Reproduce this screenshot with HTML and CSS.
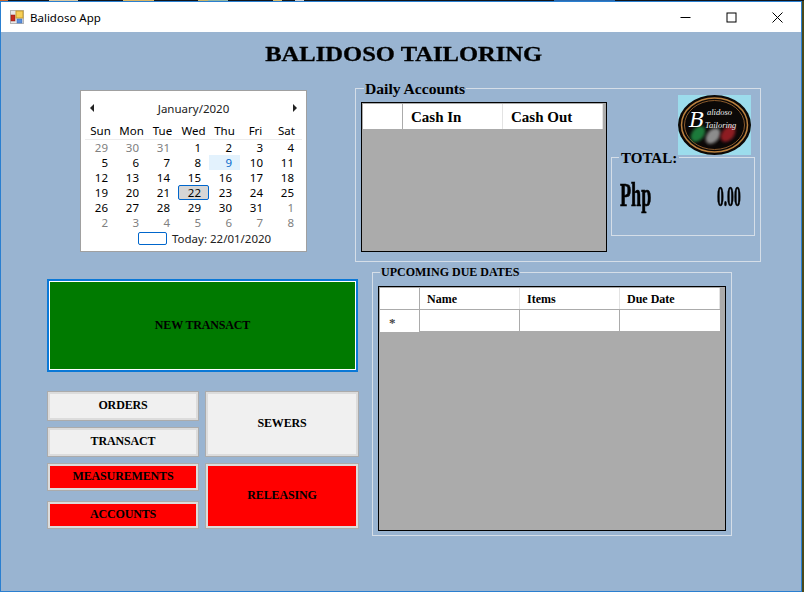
FILE: index.html
```html
<!DOCTYPE html>
<html>
    <head>
        <title>Balidoso App</title>
        <link rel="stylesheet" href="styles.css">
    </head>
    <body>
        <div class="window">
            <div class="titlebar">
                <svg class="app-icon" width="14" height="14" viewBox="0 0 14 14">
                    <rect x="0.5" y="0.5" width="13" height="13" fill="#e8e8e8" stroke="#b5b5b5"/>
                    <rect x="1" y="5" width="4" height="6" fill="#c62a1c" stroke="#8a1a10" stroke-width="0.5"/>
                    <rect x="6" y="1" width="7" height="7" fill="#f6cf57" stroke="#c79a2a"/>
                    <rect x="7" y="9" width="5" height="4" fill="#5b8fdc" stroke="#3a68b0" stroke-width="0.5"/>
                </svg>
                <span class="app-name">Balidoso App</span>
                <div class="caption-buttons">
                    <svg width="11" height="11" viewBox="0 0 11 11"><path d="M0.5 5.5H10.5" stroke="#000" fill="none"/></svg>
                    <svg width="11" height="11" viewBox="0 0 11 11"><rect x="1" y="1" width="9" height="9" stroke="#000" fill="none"/></svg>
                    <svg width="11" height="11" viewBox="0 0 11 11"><path d="M0.5 0.5L10.5 10.5M10.5 0.5L0.5 10.5" stroke="#000" fill="none"/></svg>
                </div>
            </div>
            <div class="form">
                <h1 class="shop-title">BALIDOSO TAILORING</h1>
                <div class="columns">
                    <div class="left-col">
                        <div class="calendar">
                            <div class="cal-head">
                                <span class="arrow arrow-left"></span>
                                <span>January/2020</span>
                                <span class="arrow arrow-right"></span>
                            </div>
                            <div class="cal-grid">
                                <span class="dow">Sun</span><span class="dow">Mon</span><span class="dow">Tue</span><span class="dow">Wed</span><span class="dow">Thu</span><span class="dow">Fri</span><span class="dow">Sat</span>
                                <span class="off">29</span><span class="off">30</span><span class="off">31</span><span>1</span><span>2</span><span>3</span><span>4</span>
                                <span>5</span><span>6</span><span>7</span><span>8</span><span class="hover">9</span><span>10</span><span>11</span>
                                <span>12</span><span>13</span><span>14</span><span>15</span><span>16</span><span>17</span><span>18</span>
                                <span>19</span><span>20</span><span>21</span><span class="selected">22</span><span>23</span><span>24</span><span>25</span>
                                <span>26</span><span>27</span><span>28</span><span>29</span><span>30</span><span>31</span><span class="off">1</span>
                                <span class="off">2</span><span class="off">3</span><span class="off">4</span><span class="off">5</span><span class="off">6</span><span class="off">7</span><span class="off">8</span>
                            </div>
                            <div class="cal-today">
                                <span class="today-box"></span>
                                <span>Today: 22/01/2020</span>
                            </div>
                        </div>
                        <button class="btn btn-new">NEW TRANSACT</button>
                        <div class="btn-grid">
                            <button class="btn btn-orders">ORDERS</button>
                            <button class="btn btn-sewers">SEWERS</button>
                            <button class="btn btn-transact">TRANSACT</button>
                            <button class="btn btn-red btn-measure">MEASUREMENTS</button>
                            <button class="btn btn-red btn-releasing">RELEASING</button>
                            <button class="btn btn-red btn-accounts">ACCOUNTS</button>
                        </div>
                    </div>
                    <div class="right-col">
                        <fieldset class="daily">
                            <legend>Daily Accounts</legend>
                            <div class="data-grid daily-grid">
                                <div class="grid-head">
                                    <div class="corner"></div>
                                    <div class="col">Cash In</div>
                                    <div class="col">Cash Out</div>
                                </div>
                            </div>
                            <div class="daily-side">
                                <svg class="logo" width="73" height="60" viewBox="0 0 73 60">
                                    <defs>
                                        <filter id="soft"><feGaussianBlur stdDeviation="1.4"/></filter>
                                    </defs>
                                    <rect width="73" height="60" fill="#9cdcec"/>
                                    <ellipse cx="36.5" cy="30" rx="36.5" ry="30" fill="#0b0807"/>
                                    <ellipse cx="36.5" cy="30" rx="33" ry="27" fill="none" stroke="#b9803f" stroke-width="1.5"/>
                                    <ellipse cx="36.5" cy="30" rx="30" ry="24.5" fill="none" stroke="#8a5a2c" stroke-width="1"/>
                                    <ellipse cx="20" cy="39" rx="6" ry="9" fill="#1f7a3a" transform="rotate(40 20 39)" filter="url(#soft)"/>
                                    <ellipse cx="35" cy="41" rx="6" ry="9" fill="#8c8c8c" transform="rotate(40 35 41)" filter="url(#soft)"/>
                                    <ellipse cx="50" cy="39" rx="6" ry="9" fill="#8e1c24" transform="rotate(40 50 39)" filter="url(#soft)"/>
                                    <text class="logo-b" x="11" y="32">B</text>
                                    <text class="logo-script" x="29" y="20">alidoso</text>
                                    <text class="logo-script" x="27" y="33">Tailoring</text>
                                </svg>
                                <fieldset class="total">
                                    <legend>TOTAL:</legend>
                                    <div class="total-row">
                                        <span class="php">Php</span>
                                        <span class="amount">0.00</span>
                                    </div>
                                </fieldset>
                            </div>
                        </fieldset>
                        <fieldset class="due">
                            <legend>UPCOMING DUE DATES</legend>
                            <div class="data-grid due-grid">
                                <div class="grid-head">
                                    <div class="corner"></div>
                                    <div class="col">Name</div>
                                    <div class="col">Items</div>
                                    <div class="col">Due Date</div>
                                </div>
                                <div class="grid-row">
                                    <div class="row-head">*</div>
                                    <div class="cell"></div>
                                    <div class="cell"></div>
                                    <div class="cell"></div>
                                </div>
                            </div>
                        </fieldset>
                    </div>
                </div>
            </div>
        </div>
    </body>
</html>
```

FILE: styles.css
```css
* {
    box-sizing: border-box;
}
html, body {
    margin: 0;
    height: 100%;
    overflow: hidden;
}
body {
    font-family: 'Liberation Serif', 'Times New Roman', serif;
    color: #000;
    /* bits of the desktop showing round the window */
    background: linear-gradient(to right,
        #c8662d 0 8px, #10151c 8px 49px, #d8c9a5 49px 78px, #10151c 78px 123px,
        #d9b565 123px 154px, #10151c 154px 198px, #c8b46a 198px 208px, #8fb5a5 208px 228px,
        #10151c 228px 273px, #d6bb6e 273px 282px, #10151c 282px 295px, #cfcfcf 295px 304px,
        #10151c 304px 554px, #2a6aaf 554px 615px, #10151c 615px) top left / 100% 1px no-repeat, #4a4a1c;
}
.window {
    width: 802px;
    height: 591px;
    margin-top: 1px;
    border: 1px solid #2a7fd0;
    background-color: #99b4d1;
}

/* title bar */
.titlebar {
    height: 30px;
    background-color: #fff;
    display: flex;
    align-items: center;
    padding-left: 9px;
}
.app-icon {
    margin-right: 6px;
}
.app-name {
    font-family: 'Noto Sans', sans-serif;
    font-size: 11.5px;
}
.caption-buttons {
    margin-left: auto;
    display: flex;
    gap: 35px;
    padding-right: 18px;
}

/* form */
.form {
    padding-top: 8px;
}
.shop-title {
    width: fit-content;
    margin: 0 auto;
    height: 50px;
    font-size: 21px;
    line-height: 28px;
    padding-left: 4px;
    white-space: nowrap;
    transform: scaleX(1.17);
    -webkit-text-stroke: 0.3px #000;
}
.columns {
    display: flex;
    padding-left: 46px;
}
.left-col {
    width: 308px;
    flex: none;
}
.right-col {
    display: flex;
    flex-direction: column;
    flex: none;
}

/* calendar */
.calendar {
    width: 227px;
    height: 162px;
    margin-left: 33px;
    background-color: #fff;
    border: 1px solid #a0a0a0;
    outline: 1px solid #fff;
    outline-offset: -2px;
    font-family: 'Noto Sans', sans-serif;
    font-size: 11.5px;
    padding: 9px 4px 0 4px;
}
.cal-head {
    display: flex;
    justify-content: space-between;
    align-items: center;
    height: 16px;
    padding: 0 5px 0 5px;
    color: #222;
}
.arrow {
    width: 0;
    height: 0;
    border-top: 4px solid transparent;
    border-bottom: 4px solid transparent;
}
.arrow-left {
    border-right: 4px solid #222;
}
.arrow-right {
    border-left: 4px solid #222;
}
.cal-grid {
    display: grid;
    grid-template-columns: repeat(7, 31px);
    grid-template-rows: 19px repeat(6, 15px);
    line-height: 15px;
    margin-top: 5px;
    text-align: right;
}
.cal-grid span {
    padding-right: 8px;
}
.cal-grid .dow {
    text-align: center;
    padding: 0;
    height: 19px;
    line-height: 20px;
    border-bottom: 1px solid #ececec;
}
.cal-grid .off {
    color: #808080;
}
.cal-grid .hover {
    background-color: #e3f2fd;
    color: #0a6ccc;
}
.cal-grid .selected {
    background-color: #d6d6d6;
    border: 1px solid #0066cc;
    border-radius: 2px;
    line-height: 13px;
    padding-right: 7px;
}
.cal-today {
    display: flex;
    align-items: center;
    gap: 5px;
    height: 15px;
    margin-top: 1px;
    padding-left: 53px;
    color: #222;
}
.today-box {
    width: 29px;
    height: 13px;
    border: 1px solid #0066cc;
    border-radius: 2px;
}

/* buttons */
.btn {
    display: block;
    font-family: 'Liberation Serif', 'Times New Roman', serif;
    font-weight: bold;
    font-size: 12px;
    letter-spacing: -0.15px;
    color: #000;
    padding: 0 0 1px;
    margin: 0;
    border: 1px solid #ababab;
    box-shadow: inset 0 0 0 2px #dcdcdc;
    background-color: #f0f0f0;
    border-radius: 0;
}
.btn-new {
    width: 311px;
    height: 93px;
    margin-top: 27px;
    background-color: #007a00;
    border: 2px solid #0a78d7;
    box-shadow: inset 0 0 0 1px #fff;
}
.btn-grid {
    display: grid;
    grid-template-columns: 152px 154px;
    grid-template-rows: 30px 30px 28px 32px;
    gap: 6px;
    width: 312px;
    margin-top: 19px;
}
.btn-grid .btn {
    width: 100%;
    height: 100%;
}
.btn-orders { grid-column: 1; grid-row: 1; }
.btn-transact { grid-column: 1; grid-row: 2; }
.btn-measure { grid-column: 1; grid-row: 3; }
.btn-grid .btn-accounts { grid-column: 1; grid-row: 4; margin-top: 4px; height: 28px; }
.btn-sewers { grid-column: 2; grid-row: 1 / 3; }
.btn-releasing { grid-column: 2; grid-row: 3 / 5; }
.btn-red {
    background-color: #ff0000;
}

/* group boxes */
fieldset {
    margin: 0;
    border: 1px solid #d5dee8;
    padding: 0;
    min-width: 0;
}
legend {
    font-weight: bold;
    padding: 0 1px;
}
.daily {
    width: 406px;
    height: 181px;
    margin-top: -9px;
    padding: 0 0 0 5px;
    display: flex;
    gap: 4px;
}
.daily > legend {
    font-size: 15.6px;
    line-height: 15px;
    margin-left: 3px;
}
.due {
    width: 360px;
    height: 270px;
    margin: 4px 0 0 17px;
    padding: 0 0 0 5px;
}
.due > legend {
    font-size: 12px;
    line-height: 13px;
    margin-left: 2px;
}

/* grids */
.data-grid {
    background-color: #ababab;
    border: 1px solid #000;
    padding: 1px;
}
.daily-grid {
    width: 246px;
    height: 150px;
    margin-top: 6px;
}
.due-grid {
    width: 348px;
    height: 245px;
    margin-top: 7px;
}
.grid-head,
.grid-row {
    display: flex;
}
.daily-grid .grid-head {
    height: 25px;
    font-size: 15px;
    font-weight: bold;
    line-height: 27px;
}
.daily-grid .corner {
    width: 40px;
}
.daily-grid .col {
    width: 100px;
}
.due-grid .grid-head {
    height: 21px;
    font-size: 12px;
    font-weight: bold;
    line-height: 22px;
}
.due-grid .corner {
    width: 40px;
}
.due-grid .col {
    width: 100px;
    padding-left: 7px;
}
.corner,
.col {
    background-color: #fff;
    border-right: 1px solid #e3e3e3;
}
.corner {
    border-right-color: #ababab;
}
.col {
    padding-left: 8px;
}
.grid-row {
    height: 23px;
    border-top: 1px solid #ababab;
}
.row-head {
    width: 39px;
    background-color: #fff;
    font-size: 13px;
    font-weight: bold;
    color: #444;
    line-height: 26px;
    padding-left: 9px;
}
.cell {
    width: 100px;
    background-color: #fff;
    border-left: 1px solid #ababab;
    border-bottom: 1px solid #ababab;
}
.cell:last-child {
    width: 101px;
}

/* right of daily accounts */
.daily-side {
    width: 144px;
    display: flex;
    flex-direction: column;
    align-items: flex-end;
}
.logo {
    margin: -1px 4px 0 0;
    display: block;
}
.logo-b {
    font-family: 'DejaVu Serif', serif;
    font-style: italic;
    font-size: 21px;
    fill: #fff;
}
.logo-script {
    font-family: 'Liberation Serif', serif;
    font-style: italic;
    font-size: 8.5px;
    fill: #eee;
}
.total {
    width: 144px;
    height: 87px;
    margin-top: -6px;
    padding: 0 8px;
}
.total > legend {
    font-size: 15px;
    line-height: 15px;
    margin-left: -1px;
    padding: 2px 2px 0;
}
.total-row {
    display: flex;
    justify-content: space-between;
    align-items: baseline;
    margin-top: 11px;
    padding-right: 5px;
    height: 36px;
}
.php {
    font-size: 34px;
    line-height: 36px;
    font-weight: bold;
    transform: scaleX(0.535);
    transform-origin: left center;
    width: 31px;
    white-space: nowrap;
    -webkit-text-stroke: 0.7px #000;
}
.amount {
    font-size: 29px;
    line-height: 36px;
    font-weight: bold;
    transform: scaleX(0.47);
    transform-origin: right center;
    -webkit-text-stroke: 0.6px #000;
}
```
